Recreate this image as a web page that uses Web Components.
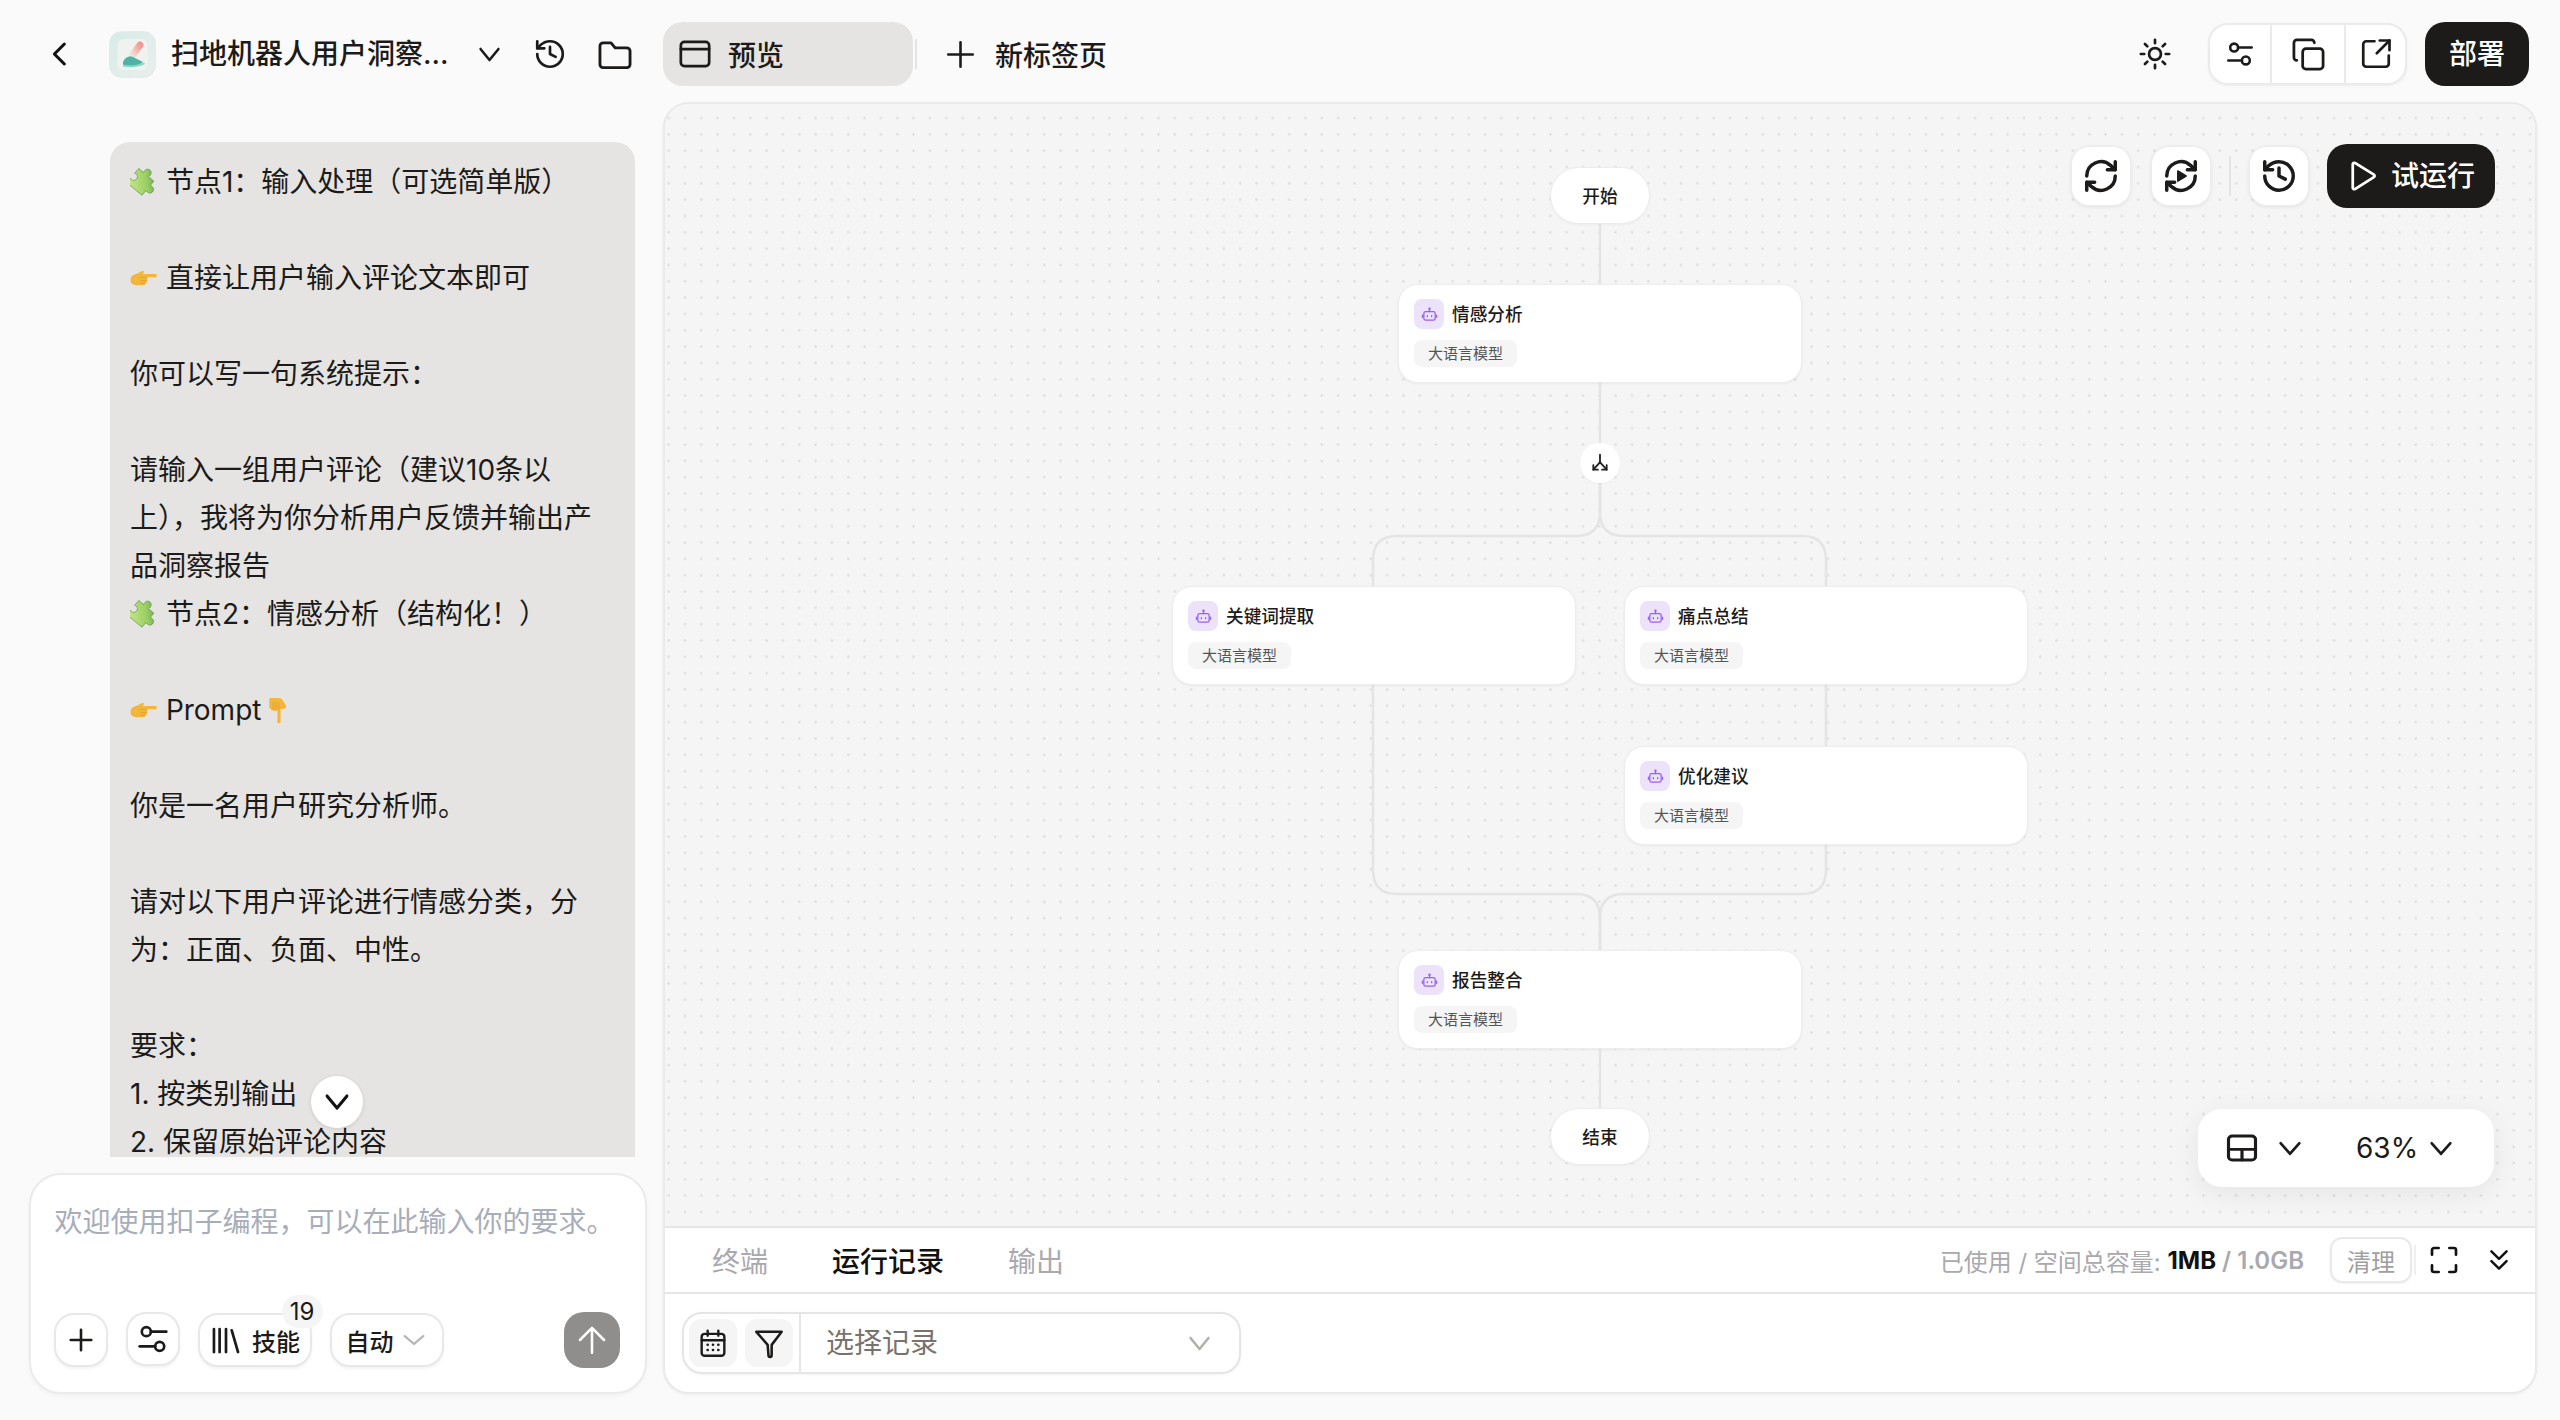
<!DOCTYPE html>
<html lang="zh-CN">
<head>
<meta charset="utf-8">
<title>扣子编程</title>
<style>
html,body{margin:0;padding:0;background:#fafafa;height:100%;overflow:hidden}
body{font-family:Inter,"Noto Sans CJK SC",sans-serif;color:#1c1b19}
</style>
</head>
<body>
<wb-app>
  <wb-title-bar slot="title"></wb-title-bar>
  <wb-top-actions slot="actions"></wb-top-actions>
  <wb-chat slot="chat">
<wb-bubble><wb-emoji kind="puzzle"></wb-emoji> 节点1：输入处理（可选简单版）

<wb-emoji kind="right"></wb-emoji> 直接让用户输入评论文本即可

你可以写一句系统提示：

请输入一组用户评论（建议10条以上），我将为你分析用户反馈并输出产品洞察报告
<wb-emoji kind="puzzle"></wb-emoji> 节点2：情感分析（结构化！）

<wb-emoji kind="right"></wb-emoji> Prompt<wb-emoji kind="down"></wb-emoji>

你是一名用户研究分析师。

请对以下用户评论进行情感分类，分为：正面、负面、中性。

要求：
1. 按类别输出
2. 保留原始评论内容</wb-bubble>
  </wb-chat>
  <wb-composer slot="composer"></wb-composer>
  <wb-panel slot="main">
    <wb-canvas slot="canvas">
      <wb-edges></wb-edges>
      <wb-pill style="left:885px;top:63px">开始</wb-pill>
      <wb-node style="left:733px;top:180px">情感分析</wb-node>
      <wb-fork style="left:915px;top:339px"></wb-fork>
      <wb-node style="left:507px;top:482px">关键词提取</wb-node>
      <wb-node style="left:959px;top:482px">痛点总结</wb-node>
      <wb-node style="left:959px;top:642px">优化建议</wb-node>
      <wb-node style="left:733px;top:846px">报告整合</wb-node>
      <wb-pill style="left:885px;top:1004px">结束</wb-pill>
      <wb-canvas-tools></wb-canvas-tools>
      <wb-zoom-bar></wb-zoom-bar>
    </wb-canvas>
    <wb-bottom slot="bottom"></wb-bottom>
  </wb-panel>
</wb-app>

<script>
const PATHS = {
  chevL:'<path d="M15.5 3.5 7.5 12l8 8.5"/>',
  chevD:'<path d="M4 8l8 8 8-8"/>',
  history:'<path d="M3 12a9 9 0 1 0 9-9 9.75 9.75 0 0 0-6.74 2.74L3 8"/><path d="M3 3v5h5"/><path d="M12 7v5l4 2"/>',
  folder:'<path d="M2.5 6.5a2 2 0 0 1 2-2h5l2.6 3.2h7.4a2 2 0 0 1 2 2v8.8a2 2 0 0 1-2 2h-15a2 2 0 0 1-2-2z"/>',
  window:'<rect x="2" y="3.500" width="20" height="17" rx="2.500"/><path d="M2 8.500h20"/>',
  plus:'<path d="M12 2.500v19M2.500 12h19"/>',
  sun:'<circle cx="12" cy="12" r="4.200"/><path d="M12 2v2.400M12 19.600V22M4.900 4.900l1.700 1.700M17.400 17.400l1.700 1.700M2 12h2.400M19.600 12H22M4.900 19.100l1.700-1.700M17.400 6.600l1.700-1.700"/>',
  sliders:'<circle cx="7" cy="6.500" r="3.400"/><path d="M10.400 6.500H22"/><circle cx="17" cy="17.500" r="3.400"/><path d="M2 17.500h11.600"/>',
  copy:'<rect x="8" y="8" width="14" height="14" rx="2.200"/><path d="M4 16c-1.100 0-2-.9-2-2V4c0-1.100.9-2 2-2h10c1.100 0 2 .9 2 2"/>',
  external:'<path d="M11 3.500H5.500a2 2 0 0 0-2 2v13a2 2 0 0 0 2 2h13a2 2 0 0 0 2-2V13"/><path d="M12.500 11.500 21 3"/><path d="M14.500 3H21v6.500"/>',
  refresh:'<path d="M3 12a9 9 0 0 1 15-6.700L21 8"/><path d="M21 3v5h-5"/><path d="M21 12a9 9 0 0 1-15 6.700L3 16"/><path d="M8 16H3v5"/>',
  refreshPlay:'<path d="M3 12a9 9 0 0 1 15-6.700L21 8"/><path d="M21 3v5h-5"/><path d="M21 12a9 9 0 0 1-15 6.700L3 16"/><path d="M8 16H3v5"/><path d="M10 8.800l5.200 3.200-5.200 3.200z" fill="currentColor" stroke-width="1"/>',
  play:'<path d="M6 3.600a1 1 0 0 1 1.500-.8l13 8.300a1 1 0 0 1 0 1.700l-13 8.400a1 1 0 0 1-1.500-.8z"/>',
  layout:'<rect x="3" y="3" width="18" height="18" rx="2.500"/><path d="M3 13h18M12 13v8"/>',
  calendar:'<rect x="3.500" y="4.500" width="17" height="17" rx="2.200"/><path d="M3.500 9.500h17M8 2v4M16 2v4"/><path d="M8 13h.01M12 13h.01M16 13h.01M8 17h.01M12 17h.01M16 17h.01" stroke-width="2"/>',
  funnel:'<path d="M2.500 3.500H21.500L14 13V20.500A1.200 1.200 0 0 1 11.600 20.500L11 13Z"/>',
  full:'<path d="M8 3H4.500A1.500 1.500 0 0 0 3 4.500V8M16 3h3.500A1.500 1.500 0 0 1 21 4.500V8M8 21H4.500A1.500 1.500 0 0 1 3 19.500V16M16 21h3.500a1.500 1.500 0 0 0 1.500-1.500V16"/>',
  dchev:'<path d="M5 4l7 7 7-7M5 13l7 7 7-7"/>',
  library:'<path d="m16 4 4.500 17M12 3v18M7.500 3v18M3.500 3v18"/>',
  up:'<path d="M12 21V3.500M3.500 12 12 3.500 20.500 12"/>',
  fork:'<path d="M12 2v7.500a4 4 0 0 1-1.200 2.900L4 20M12 9.500a4 4 0 0 0 1.200 2.900L20 20"/><path d="M4 14.500V20h5.500M20 14.500V20h-5.500"/>',
  bot:'<rect x="4" y="8" width="16" height="12" rx="2.500"/><path d="M12 8V4.500M2 13v3M22 13v3M9 13.500v1.500M15 13.500v1.500"/><circle cx="12" cy="3.800" r=".8"/>'
};

class Base extends HTMLElement {
  constructor(){ super(); this.attachShadow({mode:'open'}); }
}
function def(name, html){
  customElements.define(name, class extends Base {
    constructor(){ super(); this.shadowRoot.innerHTML = html; }
  });
}

class WbIcon extends Base {
  static get observedAttributes(){ return ['name','size','sw','h']; }
  connectedCallback(){ this.draw(); }
  attributeChangedCallback(){ this.draw(); }
  draw(){
    const n=this.getAttribute('name'), s=+this.getAttribute('size')||24, h=+this.getAttribute('h')||s, sw=this.getAttribute('sw')||2;
    this.shadowRoot.innerHTML=`<style>:host{display:inline-flex;flex:none;line-height:0}svg{display:block}</style>
    <svg width="${s}" height="${h}" viewBox="0 0 24 24" preserveAspectRatio="none" fill="none" stroke="currentColor" stroke-width="${sw}" stroke-linecap="round" stroke-linejoin="round">${PATHS[n]||''}</svg>`;
  }
}
customElements.define('wb-icon', WbIcon);

class WbEmoji extends Base {
  connectedCallback(){
    const k=this.getAttribute('kind');
    const art={
      puzzle:`<svg width="28" height="28" viewBox="2 2 22 22"><defs><linearGradient id="g" x1="0" y1="1" x2="1" y2="0"><stop offset="0" stop-color="#c9e98a"/><stop offset=".55" stop-color="#9bcf63"/><stop offset="1" stop-color="#4f9a4a"/></linearGradient></defs><g transform="rotate(40 13 13) translate(-1 -1)"><path fill="url(#g)" stroke="#5c8f49" stroke-width=".5" d="M4 8.500h5C8 6 9.300 3.800 11.500 3.800S15 6 14 8.500h5.500V13c2.500-1 4.700.3 4.700 2.500s-2.200 3.500-4.700 2.500v5H4v-4.500c2 1 4-.3 4-2.500s-2-3.500-4-2.500z"/></g></svg>`,
      right:`<svg width="28" height="20" viewBox="0 0 29 20"><path fill="#f3b63c" d="M1 8.500C2 6 4.500 5 7 4.500c2-.4 4-2.300 6-2.700 1.500-.3 2 .9 1 2l-.6 1h13.100c1.800 0 1.800 3.300 0 3.300H17.500c.6.500.6 1.400.3 2 .5.700.3 1.700-.4 2.200.2.900-.3 1.800-1.200 2.200-.2 1.200-1.200 2-2.500 2H8c-3.500 0-7.800-1.500-7.500-5.500 0-.9.200-1.600.5-2.500z"/><path fill="none" stroke="#d8942a" stroke-width=".6" d="M10 8.500h7.500M10.500 11.500h7M11 14h5.500"/></svg>`,
      down:`<svg width="22" height="28" viewBox="0 0 20 29"><path fill="#f3b63c" d="M2 2h8.500c2 0 3.500.7 4.500 2.300l3 5.200c.8 1.500.3 2.800-.8 3.500-1.200.6-3.700.3-4.500.3v13.500c0 2-3.300 2-3.300 0V15c-.6.500-1.500.6-2 .3-.7.500-1.700.3-2.200-.4-.9.200-1.800-.3-2.200-1.200C1.800 13.500 1 12.500 1 11.200V4C1 3 1.300 2 2 2z"/><path fill="none" stroke="#d8942a" stroke-width=".6" d="M5 6v8M8 6v8M11 7v7"/></svg>`
    }[k];
    const va={puzzle:-4,right:-1,down:-4}[k];
    const ml=k==='down'?6:0;
    this.shadowRoot.innerHTML=`<style>:host{display:inline-block;vertical-align:${va}px;line-height:0;margin-left:${ml}px}svg{display:block}</style>${art}`;
  }
}
customElements.define('wb-emoji', WbEmoji);

def('wb-app', `<style>
:host{display:grid;grid-template-columns:663px 1874px;grid-template-rows:102px 1292px;height:1420px;width:2560px;box-sizing:border-box}
.title{grid-column:1;grid-row:1}
.actions{grid-column:2;grid-row:1}
.left{grid-column:1;grid-row:2;display:flex;flex-direction:column;min-height:0}
.main{grid-column:2;grid-row:2;min-height:0;display:flex}
</style>
<div class="title"><slot name="title"></slot></div>
<div class="actions"><slot name="actions"></slot></div>
<div class="left"><slot name="chat"></slot><slot name="composer"></slot></div>
<div class="main"><slot name="main"></slot></div>`);

def('wb-title-bar', `<style>
:host{display:flex;align-items:center;height:64px;padding-top:22px;color:#1c1b19}
.back{margin-left:45px;color:#111}
.app{margin-left:33.600px;width:47px;height:47px;flex:none}
.name{margin-left:15.500px;font-size:28px;font-weight:500;line-height:40px;white-space:nowrap;width:274px;flex:none}
.caret{margin-left:30.500px}
.hist{margin-left:30px}
.folder{margin-left:29px}
</style>
<wb-icon class="back" name="chevL" size="30" h="28" sw="2.400"></wb-icon>
<svg class="app" viewBox="0 0 47 47">
  <defs>
    <linearGradient id="a" x1="0" y1="0" x2="1" y2="1"><stop offset="0" stop-color="#d6ece6"/><stop offset="1" stop-color="#eaefee"/></linearGradient>
    <linearGradient id="p" x1="1" y1="0" x2="0" y2="1"><stop offset="0" stop-color="#f09b92"/><stop offset=".5" stop-color="#f6c6bb"/><stop offset="1" stop-color="#e8f2ec"/></linearGradient>
  </defs>
  <rect x=".7" y=".7" width="45.600" height="45.600" rx="11.500" fill="url(#a)" stroke="#e2e8e6"/>
  <rect x="8.500" y="8" width="30" height="31" rx="6" fill="#eff2ef"/>
  <path d="M31 14 21.500 27" stroke="url(#p)" stroke-width="7" stroke-linecap="round" fill="none"/>
  <path d="M14 31C16 26 21 24 24 26L34 31C30 35 20 36 14 34Z" fill="#4fb3a4"/>
  <path d="M14 33.500C20 35 28 34.500 35 31.500L36 33C30 36.500 20 37 14 35.500Z" fill="#8bd6c8"/>
</svg>
<div class="name">扫地机器人用户洞察...</div>
<wb-icon class="caret" name="chevD" size="27" h="33" sw="2"></wb-icon>
<wb-icon class="hist" name="history" size="34" sw="1.900"></wb-icon>
<wb-icon class="folder" name="folder" size="38" h="37" sw="1.800"></wb-icon>`);

def('wb-icon-group', `<style>
:host{display:flex;height:62px;box-sizing:border-box;background:#fff;border:2px solid #ebebeb;border-radius:20px;box-shadow:0 1px 3px rgba(0,0,0,.05);overflow:hidden}
::slotted(*){display:flex;align-items:center;justify-content:center;height:100%;box-sizing:border-box;border-left:2px solid #ebebeb}
::slotted(:first-child){border-left:none}
</style><slot></slot>`);

def('wb-dark-btn', `<style>
:host{display:inline-flex;align-items:center;justify-content:center;background:#1c1b19;color:#fff;border-radius:20px;font-size:28px;font-weight:500;line-height:36px;box-sizing:border-box}
</style><slot></slot>`);

def('wb-top-actions', `<style>
:host{display:flex;align-items:center;height:64px;padding:22px 8px 0 0;color:#1c1b19}
.tab{width:250px;height:64px;box-sizing:border-box;background:#e5e4e2;border-radius:20px;display:flex;align-items:center;padding-left:15px;font-size:28px;font-weight:500;gap:16px}
.sep{width:2px;height:30px;background:#e3e3e3;margin-left:2px}
.new{margin-left:28px;display:flex;align-items:center;gap:19px;font-size:28px;font-weight:500}
.sp{flex:1}
.sun{margin-right:36px}
wb-dark-btn{width:104px;height:64px;margin-left:18px}
.g1{width:60px}.g2{width:74px}.g3{width:61px}
</style>
<div class="tab"><wb-icon name="window" size="34" sw="1.900"></wb-icon><span>预览</span></div>
<div class="sep"></div>
<div class="new"><wb-icon name="plus" size="31" sw="2"></wb-icon><span>新标签页</span></div>
<div class="sp"></div>
<wb-icon class="sun" name="sun" size="34" sw="1.900"></wb-icon>
<wb-icon-group>
  <div class="g1"><wb-icon name="sliders" size="28" sw="2.200"></wb-icon></div>
  <div class="g2"><wb-icon name="copy" size="35" sw="1.900"></wb-icon></div>
  <div class="g3"><wb-icon name="external" size="36" sw="1.800"></wb-icon></div>
</wb-icon-group>
<wb-dark-btn>部署</wb-dark-btn>`);

def('wb-chat', `<style>
:host{display:block;position:relative;height:1056px;overflow:hidden;padding:40px 28px 0 110px;box-sizing:border-box}
.scroll{position:absolute;left:311px;top:974px;width:52px;height:52px;border-radius:50%;background:#fff;display:flex;align-items:center;justify-content:center;box-shadow:0 1px 4px rgba(0,0,0,.12);color:#111}
</style><slot></slot><div class="scroll"><wb-icon name="chevD" size="30" h="36" sw="2.200"></wb-icon></div>`);

def('wb-bubble', `<style>
:host{display:block;background:#e5e4e2;border-radius:20px 20px 0 0;padding:16px 18px 40px 20px;font-size:28px;line-height:48px;white-space:pre-wrap;color:#1c1b19;width:525px;box-sizing:border-box;word-break:break-all}
</style><slot></slot>`);

def('wb-chip', `<style>
:host{display:inline-flex;align-items:center;justify-content:center;box-sizing:border-box;height:54px;background:#fff;border:2px solid #e8e8e8;border-radius:20px;box-shadow:0 2px 3px rgba(0,0,0,.05);font-size:24px;font-weight:500;color:#1c1b19;position:relative}
</style><slot></slot>`);

def('wb-composer', `<style>
:host{display:block;margin:16px 16.500px 0 28.500px;height:221px;box-sizing:border-box;background:#fff;border:2px solid #ebebeb;border-radius:32px;box-shadow:0 2px 4px rgba(0,0,0,.04);position:relative;padding:0 24px 0 23px}
.ph{font-size:28px;line-height:48px;color:#a8adba;padding-top:23px;padding-left:1px;height:138px;box-sizing:border-box;white-space:nowrap}
.row{display:flex;align-items:center;height:54px}
.plus{width:54px}
.sl{width:54px;margin-left:18px;margin-top:-2px}
.skill{width:114px;margin-left:18px;gap:9px}
.auto{width:114px;margin-left:18px;gap:6px;color:#1c1b19}
.auto wb-icon{color:#b5b5b5}
.badge{position:absolute;left:82px;top:-20px;width:41px;height:33px;border-radius:17px;background:#f5f5f5;display:flex;align-items:center;justify-content:center;font-size:24px;font-weight:400;line-height:28px}
.send{margin-left:auto;margin-right:1px;width:56px;height:56px;border-radius:20px;background:#8f8e8c;color:#fff;display:flex;align-items:center;justify-content:center}
</style>
<div class="ph">欢迎使用扣子编程，可以在此输入你的要求。</div>
<div class="row">
  <wb-chip class="plus"><wb-icon name="plus" size="26" sw="2.400"></wb-icon></wb-chip>
  <wb-chip class="sl"><wb-icon name="sliders" size="32" sw="2"></wb-icon></wb-chip>
  <wb-chip class="skill"><wb-icon name="library" size="34" h="31" sw="1.900"></wb-icon><span>技能</span><span class="badge">19</span></wb-chip>
  <wb-chip class="auto"><span>自动</span><wb-icon name="chevD" size="28" h="24" sw="2"></wb-icon></wb-chip>
  <div class="send"><wb-icon name="up" size="34" sw="1.800"></wb-icon></div>
</div>`);

def('wb-panel', `<style>
:host{display:flex;flex-direction:column;flex:1;box-sizing:border-box;border:2px solid #e9e9e9;border-radius:26px;overflow:hidden;background:#fff;box-shadow:0 1px 3px rgba(0,0,0,.05)}
</style><slot name="canvas"></slot><slot name="bottom"></slot>`);

def('wb-canvas', `<style>
:host{display:block;position:relative;height:1122px;flex:none;background-color:#f5f5f5;background-image:radial-gradient(circle,#e0e0e0 1.100px,transparent 1.500px);background-size:16.330px 16.330px;background-position:11.830px 5.830px;overflow:hidden;border-bottom:2px solid #e6e6e6}
</style><slot></slot>`);

def('wb-edges', `<style>
:host{position:absolute;left:0;top:0}
svg{display:block}
</style>
<svg width="1870" height="1122" fill="none" stroke="#e4e4e4" stroke-width="2.500">
  <path d="M935 119V180M935 278V339"/>
  <path d="M935 379V408Q935 432 911 432H732Q708 432 708 456V766Q708 790 732 790H911Q935 790 935 814V846"/>
  <path d="M935 379V408Q935 432 959 432H1137Q1161 432 1161 456V766Q1161 790 1137 790H959Q935 790 935 814V846"/>
  <path d="M935 944V1005"/>
</svg>`);

def('wb-pill', `<style>
:host{position:absolute;width:100px;height:57px;box-sizing:border-box;background:#fff;border:1px solid #ececec;border-radius:29px;display:flex;align-items:center;justify-content:center;font-size:17.640px;font-weight:500;color:#1c1b19;box-shadow:0 1px 3px rgba(0,0,0,.04)}
</style><slot></slot>`);

def('wb-fork', `<style>
:host{position:absolute;width:40px;height:40px;border-radius:50%;background:#fff;display:flex;align-items:center;justify-content:center;box-shadow:0 1px 2px rgba(0,0,0,.04);color:#222}
</style><wb-icon name="fork" size="20" sw="2.200"></wb-icon>`);

def('wb-node', `<style>
:host{position:absolute;width:404px;height:99px;box-sizing:border-box;background:#fff;border:1px solid #ededed;border-radius:20px;box-shadow:0 1px 3px rgba(0,0,0,.05);padding:14px 15px;display:block}
.h{display:flex;align-items:center;height:30px;gap:8px}
.ic{width:30px;height:30px;border-radius:8px;background:#ece3fa;display:flex;align-items:center;justify-content:center;color:#9a5ff0}
.t{font-size:17.640px;font-weight:500;color:#1c1b19;line-height:27px}
.tag{display:inline-flex;align-items:center;margin-top:11px;height:27px;box-sizing:border-box;padding:0 14px;background:#f5f5f5;border-radius:8px;font-size:15px;color:#555;line-height:27px}
</style>
<div class="h"><div class="ic"><wb-icon name="bot" size="17" sw="1.800"></wb-icon></div><div class="t"><slot></slot></div></div>
<div class="tag">大语言模型</div>`);

def('wb-square-btn', `<style>
:host{display:flex;align-items:center;justify-content:center;width:60px;height:60px;box-sizing:border-box;background:#fff;border:1px solid #ececec;border-radius:18px;box-shadow:0 1px 4px rgba(0,0,0,.08);color:#1c1b19}
</style><slot></slot>`);

def('wb-canvas-tools', `<style>
:host{position:absolute;right:40px;top:40px;display:flex;align-items:center;color:#1c1b19}
.s{width:2px;height:40px;background:#e4e4e4;margin:0 18px 0 18px}
.g{margin-left:20px}
wb-dark-btn{width:168px;height:64px;margin-left:18px;gap:12px;border-radius:20px;justify-content:flex-start;padding-left:17px}
</style>
<wb-square-btn><wb-icon name="refresh" size="38" sw="2.200"></wb-icon></wb-square-btn>
<wb-square-btn class="g"><wb-icon name="refreshPlay" size="38" sw="2.200"></wb-icon></wb-square-btn>
<div class="s"></div>
<wb-square-btn><wb-icon name="history" size="38" sw="2.200"></wb-icon></wb-square-btn>
<wb-dark-btn><wb-icon name="play" size="35" h="34" sw="1.900"></wb-icon><span>试运行</span></wb-dark-btn>`);

def('wb-zoom-bar', `<style>
:host{position:absolute;left:1533px;top:1005px;width:296px;height:78px;background:#fff;border-radius:24px;box-shadow:0 6px 28px rgba(0,0,0,.07);display:flex;align-items:center;box-sizing:border-box;padding-left:26px;font-size:28px;color:#1c1b19}
.c1{margin-left:16px}
.p{margin-left:52px;line-height:36px}
.c2{margin-left:9px}
</style>
<wb-icon name="layout" size="36" h="32" sw="2.100"></wb-icon>
<wb-icon class="c1" name="chevD" size="28" h="31" sw="2.200"></wb-icon>
<span class="p">63%</span>
<wb-icon class="c2" name="chevD" size="28" h="31" sw="2.200"></wb-icon>`);

def('wb-bottom', `<style>
:host{display:block;background:#fff;flex:1;font-size:28px}
.tabs{display:flex;align-items:center;height:64px;border-bottom:2px solid #e6e6e6;padding-left:47px;color:#a9a9ae}
.tabs .a{margin-left:64px;color:#111;font-weight:500}
.tabs .o{margin-left:64px}
.r{margin-left:auto;display:flex;align-items:center;font-size:24px;white-space:nowrap}
.r b{color:#111;font-weight:700}
.r i{font-style:normal;font-weight:600}
.clean{margin-left:26px;width:82px;height:46px;box-sizing:border-box;border:2px solid #e9e9e9;border-radius:12px;display:flex;align-items:center;justify-content:center;color:#a0a0a0;box-shadow:0 1px 2px rgba(0,0,0,.05)}
.tick{width:2px;height:30px;background:#efefef;margin-left:2px}
.full{margin-left:11.500px;color:#111}
.dc{margin-left:26.500px;margin-right:23px;color:#111}
.row{padding:18px 0 0 17px}
.sel{display:flex;align-items:center;width:559px;height:62px;box-sizing:border-box;border:2px solid #e5e5e5;border-radius:20px;box-shadow:0 1px 3px rgba(0,0,0,.05);padding-left:5px}
.b{width:48px;height:48px;border-radius:12px;background:#f5f5f5;display:flex;align-items:center;justify-content:center;margin-right:8px;color:#1c1b19}
.div{width:2px;height:100%;background:#e5e5e5;margin-left:-2px}
.val{margin-left:25px;color:#78736e;line-height:36px}
.cv{margin-left:auto;margin-right:26px;color:#b3b0ac}
</style>
<div class="tabs">
  <span>终端</span><span class="a">运行记录</span><span class="o">输出</span>
  <div class="r">
    <span>已使用 / 空间总容量:&nbsp;</span><b>1MB</b><i>&nbsp;/ 1.0GB</i>
    <div class="clean">清理</div>
    <div class="tick"></div>
    <wb-icon class="full" name="full" size="32" sw="2"></wb-icon>
    <wb-icon class="dc" name="dchev" size="26" sw="2.300"></wb-icon>
  </div>
</div>
<div class="row"><div class="sel">
  <div class="b"><wb-icon name="calendar" size="32" h="31" sw="1.800"></wb-icon></div>
  <div class="b"><wb-icon name="funnel" size="32" h="33" sw="1.900"></wb-icon></div>
  <div class="div"></div>
  <span class="val">选择记录</span>
  <wb-icon class="cv" name="chevD" size="27" h="33" sw="2"></wb-icon>
</div></div>`);
</script>
</body>
</html>
